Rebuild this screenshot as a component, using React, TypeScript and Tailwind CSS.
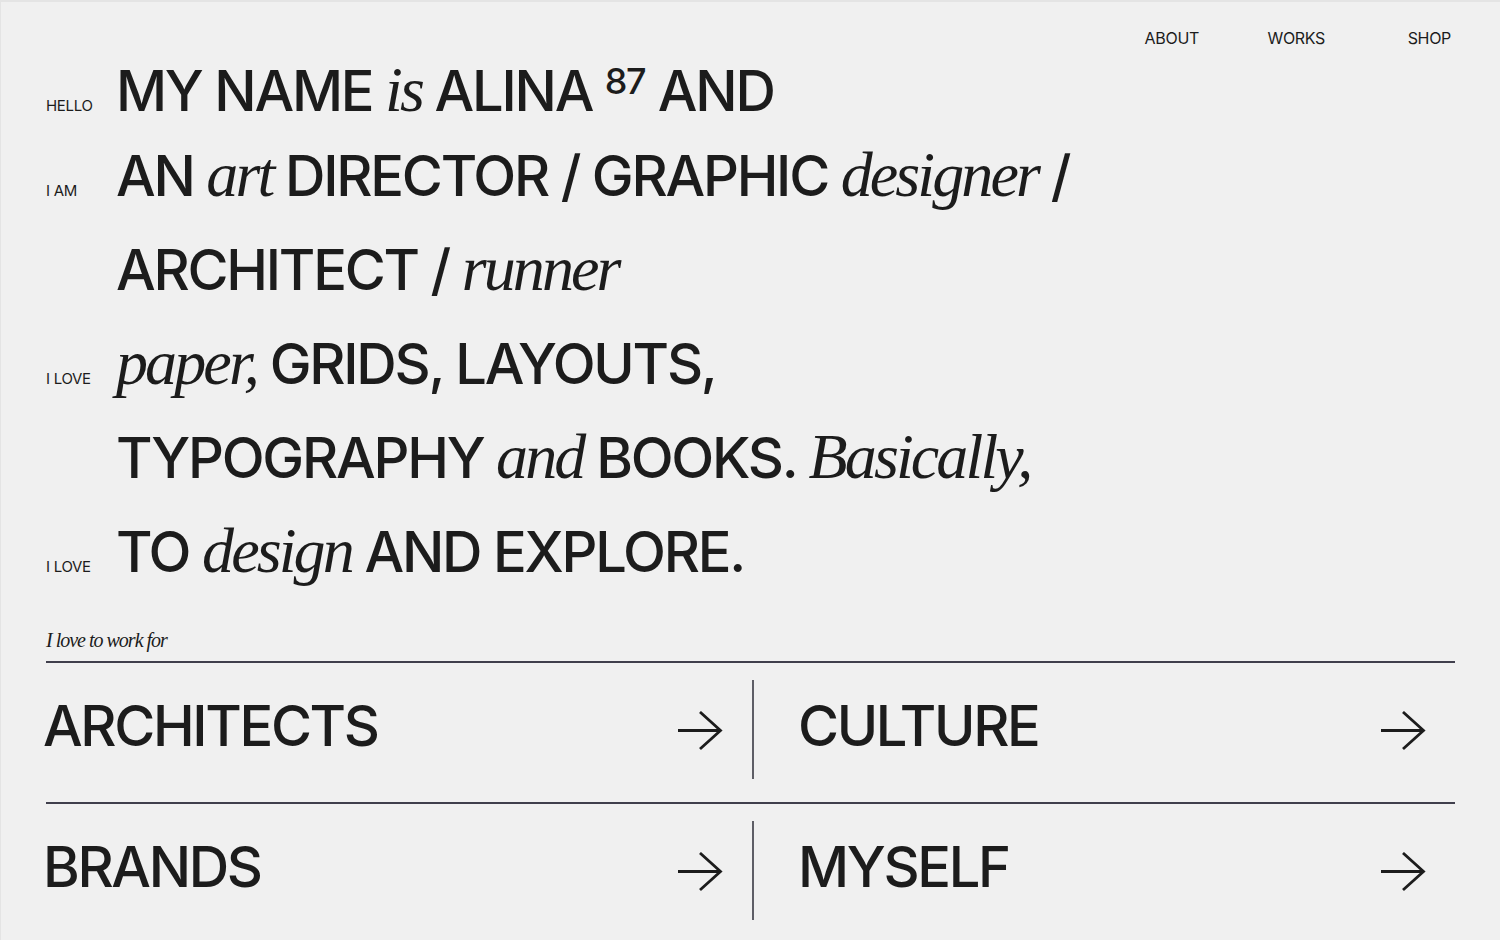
import React from "react";

function Arrow() {
  return (
    <svg width="46" height="40" viewBox="0 0 46 40" fill="none" className="shrink-0">
      <path d="M1 19.5 H43" stroke="#1c1c1c" strokeWidth="2.8" />
      <path d="M23 1 L43.5 19.5 L23 38" stroke="#1c1c1c" strokeWidth="2.8" strokeLinejoin="miter" />
    </svg>
  );
}

function I({ children }: { children: React.ReactNode }) {
  return (
    <span className="font-['Liberation_Serif',serif] font-normal italic text-[64px] tracking-[-0.045em]">
      {children}
    </span>
  );
}

function Line({
  label,
  children,
  first,
}: {
  label?: string;
  children: React.ReactNode;
  first?: boolean;
}) {
  return (
    <div
      className={
        first
          ? "flex items-baseline h-[77px] leading-[61px]"
          : "flex items-baseline h-[94px] leading-[94px]"
      }
    >
      <span className="w-[70px] shrink-0 text-[15px] tracking-[-0.02em]">{label ?? ""}</span>
      <div className="whitespace-nowrap text-[56px] font-medium tracking-[-0.04em]">{children}</div>
    </div>
  );
}

function Cell({ text, right }: { text: string; right?: boolean }) {
  return (
    <div
      className={
        right
          ? "flex items-start justify-between pl-[47px] pr-[29px] pt-[35px]"
          : "flex items-start justify-between pr-[29px] pt-[35px]"
      }
    >
      <span className="-ml-[3px] text-[56px] font-medium leading-[56px] tracking-[-0.042em]">{text}</span>
      <div className="mt-[13px]">
        <Arrow />
      </div>
    </div>
  );
}

function Row({ a, b }: { a: string; b: string }) {
  return (
    <div className="grid h-[139px] grid-cols-[706px_2px_1fr]">
      <Cell text={a} />
      <div className="mt-[17px] h-[99px] w-[2px] bg-[#5e5e66]" />
      <Cell text={b} right />
    </div>
  );
}

export default function App() {
  return (
    <div className="min-h-screen w-full overflow-hidden border-t-2 border-l border-[#e4e4e4] bg-[#f0f0f0] font-['Inter','Liberation_Sans',sans-serif] text-[#1c1c1c]">
      <nav className="flex justify-end pr-[49px] pt-[26px] text-[16px] leading-[20px] tracking-[-0.02em]">
        <a className="w-[126px] text-right">ABOUT</a>
        <a className="w-[126px] text-right">WORKS</a>
        <a className="w-[126px] text-right">SHOP</a>
      </nav>

      <div className="mt-[3px] px-[45px]">
        <Line label="HELLO" first>
          MY NAME <I>is</I> ALINA{" "}
          <span className="align-[17px] text-[36px] tracking-[-0.04em]">87</span> AND
        </Line>
        <Line label="I AM">
          AN <I>art</I> DIRECTOR / GRAPHIC <I>designer</I> /
        </Line>
        <Line>
          ARCHITECT / <I>runner</I>
        </Line>
        <Line label="I LOVE">
          <I>paper,</I> GRIDS, LAYOUTS,
        </Line>
        <Line>
          TYPOGRAPHY <I>and</I> BOOKS. <I>Basically,</I>
        </Line>
        <Line label="I LOVE">
          TO <I>design</I> AND EXPLORE.
        </Line>

        <div className="mt-[30px] font-['Liberation_Serif',serif] text-[20px] italic leading-[24px] tracking-[-0.05em]">
          I love to work for
        </div>
        <div className="mt-[9px] h-[2px] bg-[#403f4c]" />
        <Row a="ARCHITECTS" b="CULTURE" />
        <div className="h-[2px] bg-[#403f4c]" />
        <Row a="BRANDS" b="MYSELF" />
      </div>
    </div>
  );
}
